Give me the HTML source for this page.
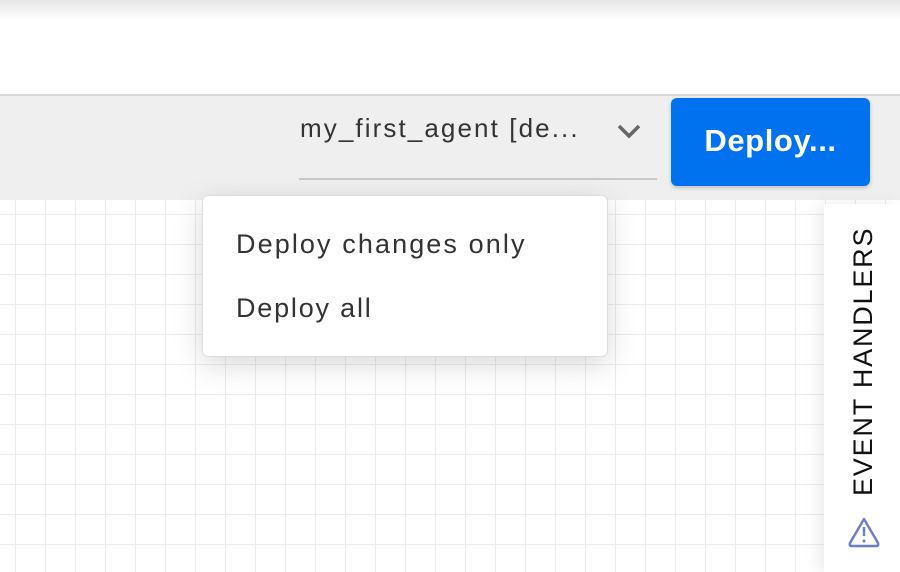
<!DOCTYPE html>
<html><head><style>
body{margin:0;width:900px;height:572px;overflow:hidden;position:relative;font-family:"Liberation Sans",sans-serif;background:#fff}
.topsh{position:absolute;left:0;top:0;width:900px;height:20px;background:linear-gradient(#e6e6e6,#fff)}
.bar{position:absolute;left:0;top:94px;width:900px;height:106px;background:#efefef;border-top:2px solid #d9d9d9;box-sizing:border-box}
.grid{position:absolute;left:0;top:200px;width:900px;height:372px;background-color:#fff;
background-image:linear-gradient(90deg,#ebebeb 1px,transparent 1px),linear-gradient(#ebebeb 1px,transparent 1px);
background-size:30px 30px;background-position:15px 14px}
.sel{position:absolute;left:300px;top:113px;font-size:26px;color:#333;letter-spacing:2.1px}
.ul{position:absolute;left:299px;top:178px;width:358px;height:2px;background:#c8c8c8}
.btn{position:absolute;left:671px;top:98px;width:199px;height:88px;background:#0072f0;border-radius:6px;color:#fff;font-size:31px;font-weight:bold;text-align:center;line-height:86px;box-shadow:0 2px 4px rgba(0,0,0,.2);letter-spacing:0.6px}
.menu{position:absolute;left:202px;top:195px;width:406px;height:162px;background:#fff;border:1px solid #ddd;border-radius:6px;box-sizing:border-box;box-shadow:0 8px 30px rgba(0,0,0,.15)}
.menu div{position:absolute;left:33px;font-size:27px;color:#333}
.side{position:absolute;left:824px;top:204px;width:76px;height:368px;background:#fff;box-shadow:-6px 0 14px rgba(0,0,0,.08)}
.vt{position:absolute;left:863px;top:496px;transform:rotate(-90deg);transform-origin:0 0;font-size:27px;color:#111;white-space:nowrap;line-height:30px;margin-left:-15px;letter-spacing:1.8px}
</style></head><body>
<div class="topsh"></div>
<div class="bar"></div>
<div class="grid"></div>
<div class="sel">my_first_agent [de...</div>
<svg style="position:absolute;left:616px;top:122px" width="26" height="18"><path d="M3 4 L13 14 L23 4" stroke="#666" stroke-width="3.5" fill="none"/></svg>
<div class="ul"></div>
<div class="btn">Deploy...</div>
<div class="menu"><div style="top:33px;letter-spacing:2.1px">Deploy changes only</div><div style="top:97px;letter-spacing:1.8px">Deploy all</div></div>
<div class="side"></div>
<div class="vt">EVENT HANDLERS</div>
<svg style="position:absolute;left:847px;top:516px" width="34" height="32" viewBox="0 0 34 32"><path d="M17 3 L31 27 Q32 30 29 30 L5 30 Q2 30 3 27 Z" stroke="#6b7fce" stroke-width="2.5" fill="none" stroke-linejoin="round"/><path d="M17 11 V20" stroke="#6b7fce" stroke-width="2.5"/><circle cx="17" cy="25" r="1.5" fill="#6b7fce"/></svg>
</body></html>
